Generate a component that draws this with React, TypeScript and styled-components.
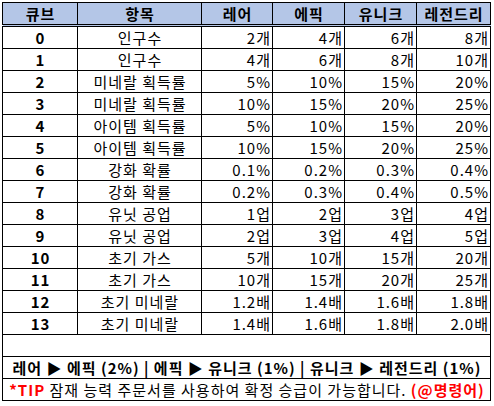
import React from 'react';
import styled, { createGlobalStyle } from 'styled-components';

const GlobalStyle = createGlobalStyle`
  html, body {
    margin: 0;
    padding: 0;
    background: #ffffff;
  }
  body {
    font-family: "Noto Sans CJK KR", "Noto Sans", sans-serif;
    color: #000000;
  }
`;

const Sheet = styled.div`
  width: 494px;
  height: 406px;
  box-sizing: border-box;
  padding: 2px 0 0 2px;
  overflow: hidden;
  background: #ffffff;
`;

const Table = styled.table`
  border-collapse: collapse;
  table-layout: fixed;
  width: 489px;
  border: 1px solid #000;
`;

const HeadCell = styled.th`
  height: 21px;
  padding: 0 0 0 1px;
  background: #b4c6e7;
  border: 1px solid #000;
  border-bottom: 3px double #000;
  font-size: 15px;
  letter-spacing: 1px;
  font-weight: 700;
  line-height: 21px;
  text-align: center;
  white-space: nowrap;
`;

const Cell = styled.td<{ $align?: 'left' | 'center' | 'right'; $bold?: boolean }>`
  height: 21px;
  padding: ${(p) => (p.$align === 'center' ? '0 0 0 1px' : '0 1px 0 2px')};
  border: 1px solid #000;
  font-size: 15px;
  letter-spacing: 1px;
  font-weight: ${(p) => (p.$bold ? 700 : 400)};
  line-height: 21px;
  text-align: ${(p) => p.$align ?? 'right'};
  white-space: nowrap;
  overflow: hidden;
`;

const NoteCell = styled.td`
  height: 21px;
  padding: 0 0 0 1px;
  border: 1px solid #000;
  font-size: 15px;
  letter-spacing: 1px;
  line-height: 21px;
  text-align: center;
  white-space: nowrap;
`;

const Bold = styled.span`
  font-weight: 700;
`;

const Red = styled.span`
  color: #ff0000;
  font-weight: 700;
`;

const rows: [string, string, string, string, string, string][] = [
  ['0', '인구수', '2개', '4개', '6개', '8개'],
  ['1', '인구수', '4개', '6개', '8개', '10개'],
  ['2', '미네랄 획득률', '5%', '10%', '15%', '20%'],
  ['3', '미네랄 획득률', '10%', '15%', '20%', '25%'],
  ['4', '아이템 획득률', '5%', '10%', '15%', '20%'],
  ['5', '아이템 획득률', '10%', '15%', '20%', '25%'],
  ['6', '강화 확률', '0.1%', '0.2%', '0.3%', '0.4%'],
  ['7', '강화 확률', '0.2%', '0.3%', '0.4%', '0.5%'],
  ['8', '유닛 공업', '1업', '2업', '3업', '4업'],
  ['9', '유닛 공업', '2업', '3업', '4업', '5업'],
  ['10', '초기 가스', '5개', '10개', '15개', '20개'],
  ['11', '초기 가스', '10개', '15개', '20개', '25개'],
  ['12', '초기 미네랄', '1.2배', '1.4배', '1.6배', '1.8배'],
  ['13', '초기 미네랄', '1.4배', '1.6배', '1.8배', '2.0배'],
];

const headers = ['큐브', '항목', '레어', '에픽', '유니크', '레전드리'];
const widths = [75, 124, 71, 72, 72, 74];

export default function App() {
  return (
    <>
      <GlobalStyle />
      <Sheet>
        <Table>
          <colgroup>
            {widths.map((w, i) => (
              <col key={i} style={{ width: w }} />
            ))}
          </colgroup>
          <thead>
            <tr>
              {headers.map((h) => (
                <HeadCell key={h}>{h}</HeadCell>
              ))}
            </tr>
          </thead>
          <tbody>
            {rows.map((r) => (
              <tr key={r[0]}>
                <Cell $align="center" $bold>
                  {r[0]}
                </Cell>
                <Cell $align="center">{r[1]}</Cell>
                <Cell>{r[2]}</Cell>
                <Cell>{r[3]}</Cell>
                <Cell>{r[4]}</Cell>
                <Cell>{r[5]}</Cell>
              </tr>
            ))}
            <tr>
              <NoteCell colSpan={6} />
            </tr>
            <tr>
              <NoteCell colSpan={6}>
                <Bold>레어 ▶ 에픽 (2%) | 에픽 ▶ 유니크 (1%) | 유니크 ▶ 레전드리 (1%)</Bold>
              </NoteCell>
            </tr>
            <tr>
              <NoteCell colSpan={6}>
                <Red>*TIP</Red> 잠재 능력 주문서를 사용하여 확정 승급이 가능합니다. <Red>(@명령어)</Red>
              </NoteCell>
            </tr>
          </tbody>
        </Table>
      </Sheet>
    </>
  );
}
